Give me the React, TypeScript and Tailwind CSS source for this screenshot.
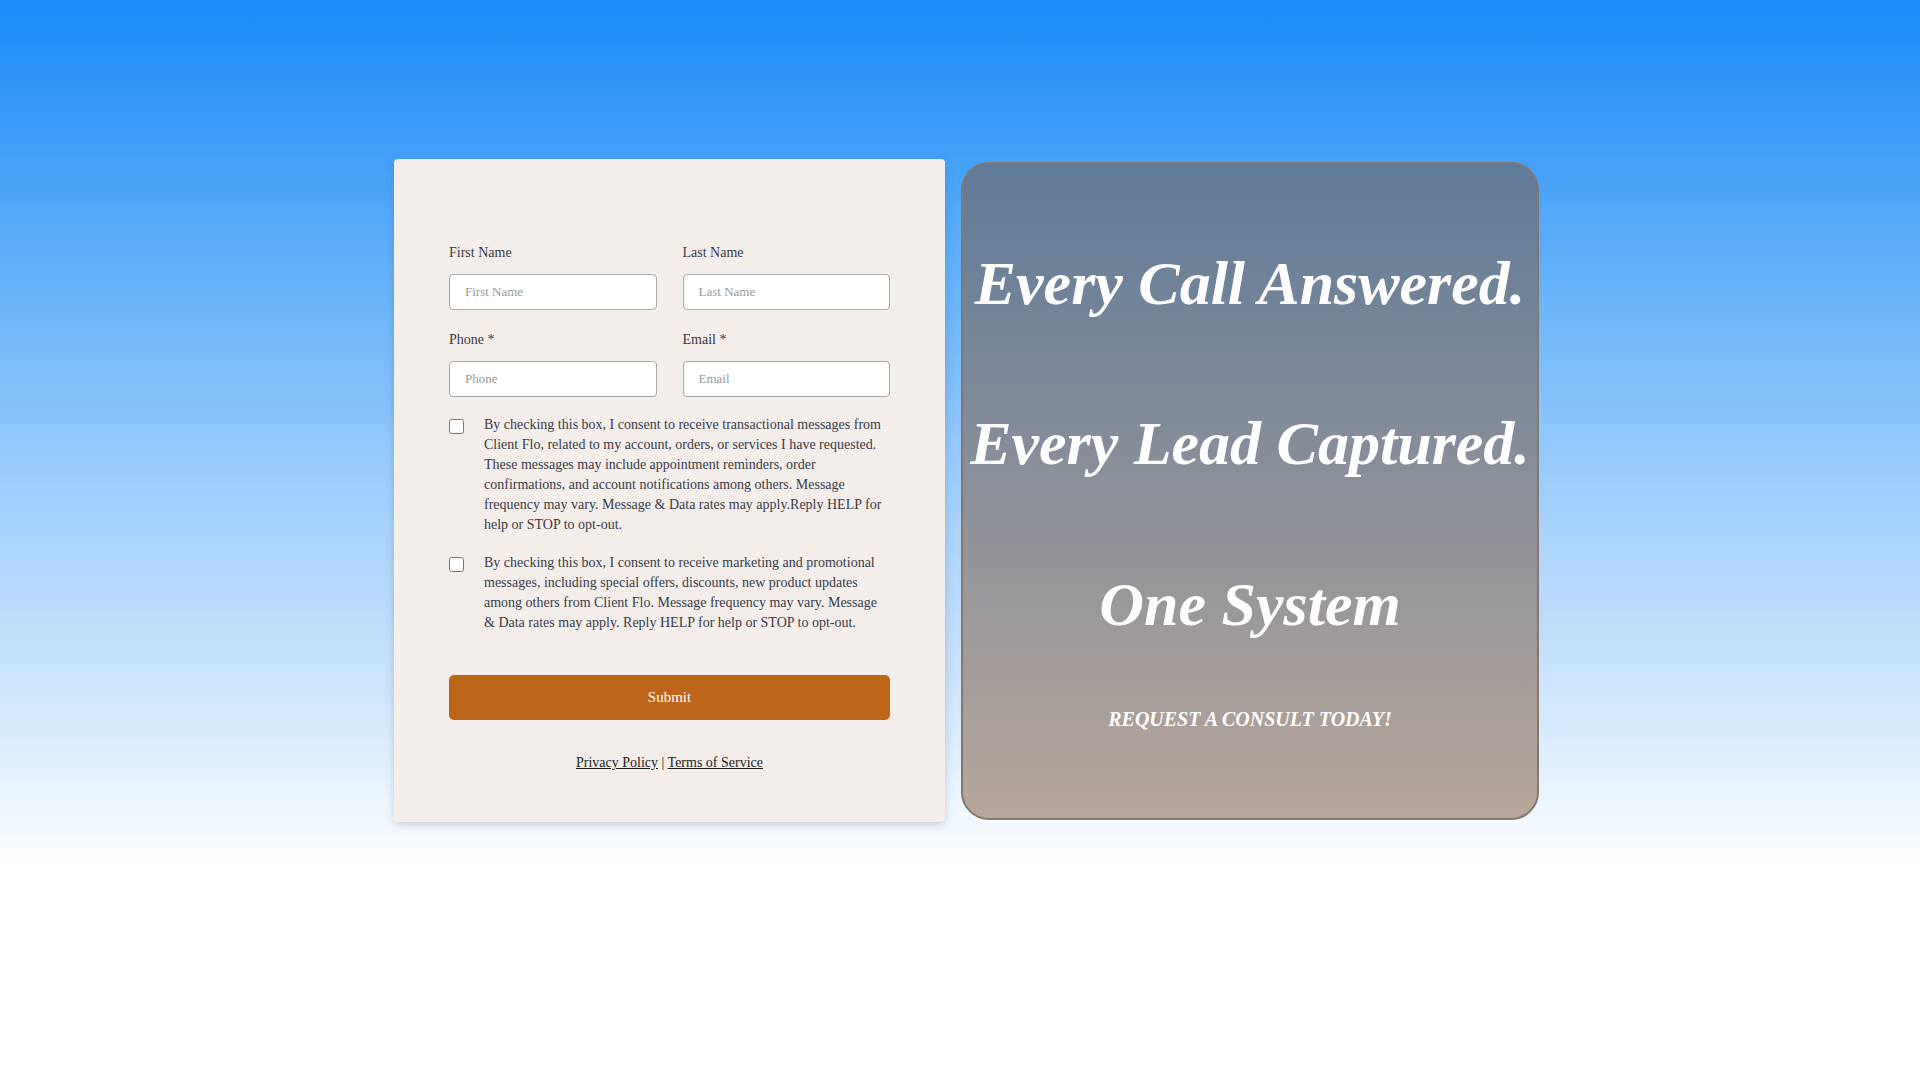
import React from 'react'

const serif = "font-['Liberation_Serif','Times_New_Roman',serif]"

function Field({ label, placeholder }: { label: string; placeholder: string }) {
    return (
        <div className="flex flex-col">
            <label className="text-[14px] leading-[20px] text-[#3a3a44] mb-[11px]">{label}</label>
            <input
                placeholder={placeholder}
                className={`${serif} h-[36px] w-full bg-white border border-[#a8a8a8] rounded-[4px] px-[15px] text-[13px] text-[#333] placeholder:text-[#9a9a9a] outline-none`}
            />
        </div>
    )
}

function Consent({ text }: { text: string }) {
    return (
        <div className="flex items-start">
            <div className="w-[35px] shrink-0 pt-[4px]">
                <input type="checkbox" className="w-[15px] h-[15px] m-0 block" />
            </div>
            <p className="text-[14px] leading-[20px] text-[#393b47]">{text}</p>
        </div>
    )
}

export default function App() {
    return (
        <div className={`${serif} w-full h-screen overflow-hidden bg-[linear-gradient(to_bottom,#1a8bf6_0%,#45a1f8_15%,#9ecefb_45%,#d8ebfd_68%,#ffffff_80%,#ffffff_100%)]`}>
            <div className="flex justify-center pt-[159px] pl-[13px]">
                <div className="flex items-start gap-[16px]">

                    {/* Form card */}
                    <div className="w-[551px] h-[663px] bg-[#f3eeea] rounded-[4px] shadow-[0_3px_8px_rgba(60,80,110,0.25)] px-[55px] pt-[84px]">
                        <div className="grid grid-cols-2 gap-x-[26px] gap-y-[20px]">
                            <Field label="First Name" placeholder="First Name" />
                            <Field label="Last Name" placeholder="Last Name" />
                            <Field label="Phone *" placeholder="Phone" />
                            <Field label="Email *" placeholder="Email" />
                        </div>

                        <div className="mt-[18px] flex flex-col gap-[18px]">
                            <Consent text="By checking this box, I consent to receive transactional messages from Client Flo, related to my account, orders, or services I have requested. These messages may include appointment reminders, order confirmations, and account notifications among others. Message frequency may vary. Message & Data rates may apply.Reply HELP for help or STOP to opt-out." />
                            <Consent text="By checking this box, I consent to receive marketing and promotional messages, including special offers, discounts, new product updates among others from Client Flo. Message frequency may vary. Message & Data rates may apply. Reply HELP for help or STOP to opt-out." />
                        </div>

                        <button className="mt-[42px] w-full h-[45px] bg-[#bd6519] rounded-[5px] text-white text-[15px]">
                            Submit
                        </button>

                        <p className="mt-[33px] text-center text-[14px] leading-[20px] text-[#1c1c1c]">
                            <a className="underline">Privacy Policy</a> | <a className="underline">Terms of Service</a>
                        </p>
                    </div>

                    {/* Promo panel */}
                    <div className="mt-[3px] w-[578px] h-[658px] rounded-[28px] border-2 border-[#85766e] bg-[linear-gradient(to_bottom,#5f7b99_0%,#8c909a_50%,#b7a69b_100%)] flex flex-col items-center text-white italic font-bold pt-[84px]">
                        <h1 className="text-[62px] leading-[70px] whitespace-nowrap">Every Call Answered.</h1>
                        <h1 className="mt-[90px] text-[62px] leading-[70px] whitespace-nowrap">Every Lead Captured.</h1>
                        <h1 className="mt-[91px] text-[62px] leading-[70px] whitespace-nowrap">One System</h1>
                        <p className="mt-[66px] text-[20px] leading-[28px]">REQUEST A CONSULT TODAY!</p>
                    </div>
                </div>
            </div>
        </div>
    )
}
